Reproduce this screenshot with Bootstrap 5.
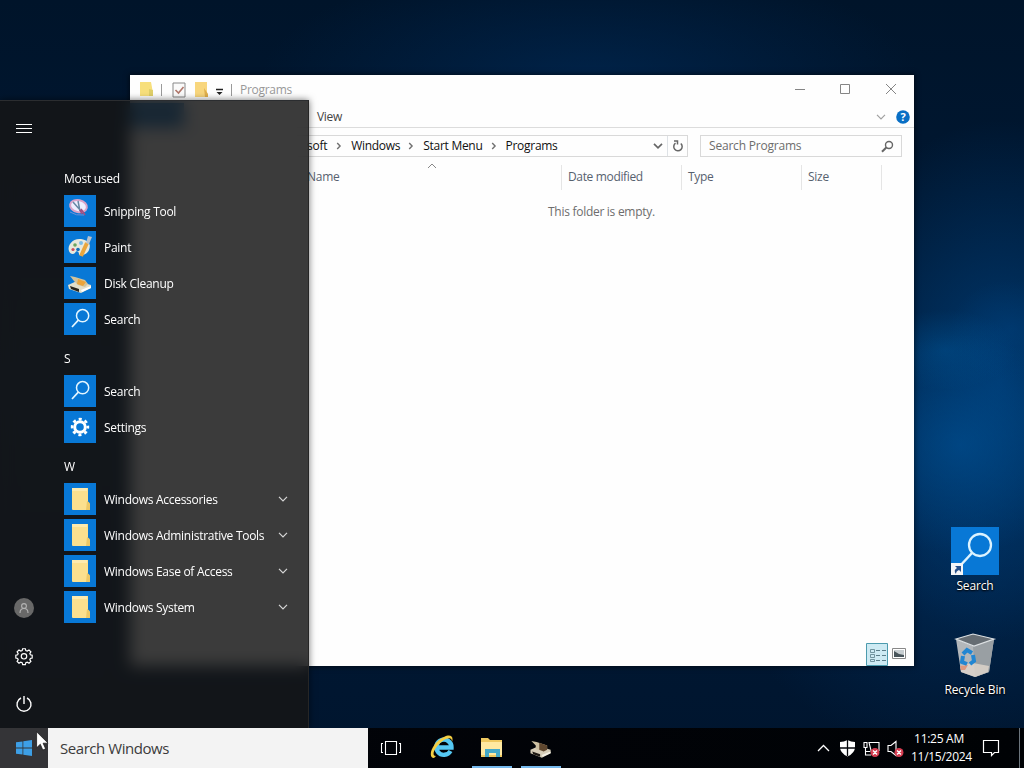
<!DOCTYPE html>
<html lang="en">
<head>
<meta charset="utf-8">
<title>Desktop</title>
<link href="https://cdn.jsdelivr.net/npm/bootstrap@5.3.0/dist/css/bootstrap.min.css" rel="stylesheet">
<style>
body{margin:0;overflow:hidden;font-family:"Open Sans","Noto Sans",sans-serif;font-size:12px;line-height:16px;letter-spacing:-.28px}
svg{display:block;flex:none}
.desktop{width:1024px;height:768px;background:
 radial-gradient(ellipse 70px 40px at 945px 350px,rgba(0,88,155,.4),transparent),
 radial-gradient(ellipse 60px 50px at 1010px 330px,rgba(0,70,135,.35),transparent),
 radial-gradient(ellipse 120px 110px at 960px 445px,rgba(0,88,160,.5),transparent),
 radial-gradient(ellipse 180px 260px at 1000px 380px,rgba(0,72,138,.65),transparent),
 radial-gradient(ellipse 330px 120px at 590px 80px,rgba(0,48,100,.5),transparent),
 radial-gradient(ellipse 240px 220px at 960px 540px,rgba(0,55,110,.55),transparent),
 linear-gradient(#00142a,#001a38 50%,#00152e)}
.explorer{left:130px;top:75px;width:784px;height:591px;background:#fefefe;color:#4c4f55;box-shadow:0 0 5px 1px rgba(0,0,0,.5)}
.titlebar{height:27px;padding:2px 0 0 8px}
.title-text{color:#999;border-left:1px solid #999;line-height:12px;padding-left:8px}
.tabs-row{height:26px;border-bottom:1px solid #dcdcdc}
.file-tab{width:54px;height:24px;background:#1979ca}
.view-tab{margin-left:133px;color:#444}
.addr-row{height:37px;padding-top:7px}
.box-field{height:22px;border:1px solid #d9d9d9}
.addr{width:548px;margin-left:10px;color:#111}
.addr-path{padding-left:166px}
.cols-row{height:25px;color:#57616f}
.cols-row>div{border-right:1px solid #e5e5e5;padding:4px 6px}
.start-menu{left:0;top:100px;width:309px;height:628px;background:rgba(21,21,21,.84);backdrop-filter:blur(8px);box-shadow:0 0 7px rgba(0,0,0,.55);border-top:1px solid #2b2d30;border-right:1px solid #262626;color:#fff}
.rail{width:48px;padding-top:22px;padding-bottom:14px}
.app-list{margin-left:16px;width:228px;padding-top:56px}
.app-head{height:36px;padding-top:14px}
.app-row{height:36px;gap:8px}
.app-row span{padding-top:2px}
.chev{color:#d8d8d8}
.tile{width:32px;height:32px;background:#0878d6}
.icon-label{color:#fff;text-shadow:0 1px 2px #000,0 0 2px #000;margin-top:3px;white-space:nowrap;letter-spacing:-.15px}
.shortcut{width:76px}
.taskbar{left:0;top:728px;width:1024px;height:40px;background:linear-gradient(90deg,#02040a,#000205)}
.start-btn{width:48px;background:#343437}
.search-box{width:320px;background:#f3f3f3;color:#3b3b3b;font-size:15px;padding-left:12px;letter-spacing:-.45px}
.task-btn{width:49px;padding-top:5px}
.task-btn.running{width:40px;margin-right:9px;border-bottom:2px solid #76b9ed}
.clock{color:#fff;line-height:18px;width:60px}
.day-edge{width:5px;height:40px}
.pointer{left:36px;top:731px}
</style>
<script src="https://cdn.jsdelivr.net/npm/bootstrap@5.3.0/dist/js/bootstrap.bundle.min.js"></script>
</head>
<body>
<svg width="0" height="0" class="position-absolute">
 <symbol id="folder" viewBox="0 0 32 32"><path d="M8 5h16v14l2 2v6H9q-1 0-1-1z" fill="#fbe08e"/><path d="M8 5h15v3H8z" fill="#fdeaae"/><path d="M23 18q3 1 3 4v5h-4z" fill="#edc866"/></symbol>
 <symbol id="lens" viewBox="0 0 32 32"><g fill="none" stroke="#e4f6ff"><circle cx="18.600" cy="12.700" r="6.100" stroke-width="1.500"/><path d="M14.300 17.200L8 24" stroke-width="1.700"/></g></symbol>
 <symbol id="chev" viewBox="0 0 10 6"><path d="M1 .8l4 4 4-4" fill="none" stroke="currentColor" stroke-width="1.200"/></symbol>
 <symbol id="sep" viewBox="0 0 6 8"><path d="M1.200 1l2.900 3-2.900 3" fill="none" stroke="#707070" stroke-width="1.400"/></symbol>
</svg>

<main class="desktop position-relative overflow-hidden">

 <section class="explorer position-absolute d-flex flex-column">
  <div class="titlebar d-flex align-items-center">
   <svg width="93" height="20" viewBox="0 0 93 20"><path d="M2 2h11l2 11v3H2z" fill="#f7df7c"/><path d="M11 9l4 1v6h-4z" fill="#dfcf69"/><path d="M23.500 4v12" stroke="#9a9a9a"/><path d="M35 3h12v14H35z" fill="#fafafa" stroke="#888"/><path d="M37.500 10l3 3 5-6" fill="none" stroke="#b0776b" stroke-width="1.600"/><path d="M57 2h12v10l1 5H57z" fill="#f8d67d"/><path d="M66 8l4 6v3h-3z" fill="#e0af4c"/><path d="M78 9.500h7" stroke="#222" stroke-width="1.500"/><path d="M78.500 12h6l-3 3z" fill="#222"/></svg>
   <span class="title-text">Programs</span>
   <svg class="ms-auto me-3" width="105" height="20" viewBox="0 0 105 20" fill="none" stroke="#858585"><path d="M2 9.500h10M47.500 4.500h9v9h-9zM93 4l10 10m0-10L93 14"/></svg>
  </div>
  <div class="tabs-row d-flex align-items-center">
   <div class="file-tab"></div><span class="view-tab pt-1">View</span>
   <svg class="ms-auto mt-1" width="10" height="6" style="color:#a0a0a0"><use href="#chev"/></svg>
   <svg class="mt-1" width="14" height="14" viewBox="0 0 14 14" style="margin:0 4px 0 10px"><circle cx="7" cy="7" r="6.800" fill="#096fc5"/><text x="7" y="11" text-anchor="middle" font-size="11" font-weight="700" fill="#fff">?</text></svg>
  </div>
  <div class="addr-row d-flex">
   <div class="addr box-field d-flex align-items-center">
    <div class="addr-path d-flex align-items-center flex-grow-1"><span>soft</span><svg style="margin-left:9px" width="6" height="8"><use href="#sep"/></svg><span style="margin-left:9px">Windows</span><svg style="margin-left:8px" width="6" height="8"><use href="#sep"/></svg><span style="margin-left:9px">Start Menu</span><svg class="ms-2" width="6" height="8"><use href="#sep"/></svg><span style="margin-left:9px">Programs</span></div>
    <svg width="10" height="6" viewBox="0 0 10 6" class="me-1"><path d="M1 .8l4 4 4-4" fill="none" stroke="#666" stroke-width="1.700"/></svg>
    <div class="border-start h-100 d-flex align-items-center justify-content-center" style="width:20px"><svg width="12" height="14" viewBox="0 0 12 14"><path d="M3.500 4.200a4.200 4.200 0 1 0 5.300.300M2 2h3.500v3.500" transform="matrix(1 0 0 1 0 0)" fill="none" stroke="#666" stroke-width="1.500"/></svg></div>
   </div>
   <div class="box-field d-flex align-items-center justify-content-between" style="width:202px;margin-left:12px;padding:0 7px 0 8px;color:#6d6d6d;letter-spacing:-.2px"><span>Search Programs</span><svg width="13" height="13" viewBox="0 0 13 13" fill="none" stroke="#666"><circle cx="8" cy="5" r="3.500" stroke-width="1.400"/><path d="M5.300 7.500L1 11.800" stroke-width="2"/></svg></div>
  </div>
  <div class="cols-row d-flex position-relative">
   <svg class="position-absolute" width="10" height="6" viewBox="0 0 10 6" style="left:297px;top:-2px"><path d="M1 5l4-4 4 4" fill="none" stroke="#888"/></svg>
   <div style="width:432px;padding-left:177px">Name</div><div style="width:120px;letter-spacing:-.35px">Date modified</div><div style="width:120px">Type</div><div style="width:80px">Size</div>
  </div>
  <div style="padding:14px 0 0 418px;color:#6d6d6d">This folder is empty.</div>
  <div class="mt-auto d-flex justify-content-end align-items-end" style="padding-right:5px">
   <svg width="43" height="23" viewBox="0 0 43 23"><path d="M.5.500h21v22H.500z" fill="#cdeaf3" stroke="#4c9bae"/><g fill="none" stroke="#5b7d89"><path d="M4.500 6.500h4v3h-4zM4.500 11.500h4v3h-4zM4.500 16.500h4v2h-4z" stroke-width=".8"/><path d="M10 7.500h4m2 0h4m-10 5h4m2 0h4m-10 5h4m2 0h4"/></g><path d="M26.500 5.500h13v10h-13z" fill="#fff" stroke="#888"/><path d="M28 7h10v7H28z" fill="#c7ced1"/><path d="M28 8l5 3 5 1v2H28z" fill="#48545a"/></svg>
  </div>
 </section>

 <div class="shortcut position-absolute text-center d-flex flex-column align-items-center" style="left:937px;top:527px">
  <svg width="48" height="48" viewBox="0 0 48 48"><path d="M0 0h48v48H0z" fill="#0878d6"/><g fill="none" stroke="#dcf3ff"><circle cx="29" cy="18" r="11" stroke-width="2.300"/><path d="M21 26L8 40" stroke-width="2.500"/></g><path d="M0 36h12v12H0z" fill="#f4f6f8"/><path d="M4 39h6v6l-2-2q-3 1-3 4-3-4 1-6z" fill="#28518b"/></svg>
  <span class="icon-label">Search</span>
 </div>
 <div class="shortcut position-absolute text-center d-flex flex-column align-items-center" style="left:937px;top:631px">
  <svg width="48" height="48" viewBox="0 0 48 48"><path d="M5 8l17 7 21-7-5 33-14 5-14-5z" fill="#b3b7ba"/><path d="M22 15l21-7-5 33-14 5z" fill="#999fa3"/><path d="M5 8l17-5 21 5-20 7z" fill="#666d73" stroke="#dde1e3" stroke-width="1.200"/><path d="M9 35l13-3 16 3-1 6-13 5-14-5z" fill="#ddd3ca" opacity=".85"/><path d="M9 35l8-1-3 5-4 0z" fill="#e08a6c" opacity=".8"/><g fill="none" stroke="#2286d2" stroke-width="4"><path d="M12 23l4-4 5 3M22 24l1 6-4 3M16 33l-5-2 1-6"/></g></svg>
  <span class="icon-label">Recycle Bin</span>
 </div>

 <aside class="start-menu position-absolute d-flex">
  <nav class="rail d-flex flex-column align-items-center">
   <svg width="16" height="12" viewBox="0 0 16 12"><path d="M0 1.500h16M0 5.500h16M0 9.500h16" stroke="#fff"/></svg>
   <div class="mt-auto d-flex flex-column align-items-center" style="gap:28px">
    <svg width="20" height="20" viewBox="0 0 20 20"><circle cx="10" cy="10" r="10" fill="#686868"/><g fill="none" stroke="#b4b4b4" stroke-width="1.100"><circle cx="10" cy="8" r="2.400"/><path d="M6 15q0-4.500 4-4.500t4 4.500"/></g></svg>
    <svg width="20" height="20" viewBox="-11 -11 22 22" fill="none" stroke="#fff" stroke-width="1.300"><path d="M-1.500-8h3l.5 2 1.600.6 1.900-1.200 2.100 2.100-1.200 1.900.6 1.300 2 .5v3l-2 .5-.6 1.300 1.200 1.900-2.100 2.100-1.900-1.200-1.600.6-.5 2h-3l-.5-2-1.600-.6-1.900 1.200-2.100-2.100 1.200-1.900-.6-1.300-2-.5v-3l2-.5.6-1.300-1.200-1.900 2.100-2.100 1.900 1.200 1.600-.6z"/><circle r="3" cy=".3"/></svg>
    <svg width="20" height="20" viewBox="0 0 20 20" fill="none" stroke="#fff" stroke-width="1.400"><path d="M7 4a7 7 0 1 0 6 0M10 2v8"/></svg>
   </div>
  </nav>
  <div class="app-list">
   <div class="app-head">Most used</div>
   <div class="app-row d-flex align-items-center"><svg class="tile" viewBox="0 0 32 32"><ellipse cx="14.500" cy="11" rx="8.500" ry="6" fill="#eef" stroke="#d9a3c8" stroke-width="2" transform="rotate(12 14 11)"/><path d="M9 7l8 9M14 6l2 10" stroke="#6688a5" stroke-width="1.500"/><path d="M16 15l2 4M17 14l4 6" stroke="#a04f82" stroke-width="1.600"/><path d="M6 17q6 4 14 3" stroke="#6c8fd8" fill="none"/></svg><span>Snipping Tool</span></div>
   <div class="app-row d-flex align-items-center"><svg class="tile" viewBox="0 0 32 32"><path d="M17 8C9 7 3 14 5 20c1 3 4 4 6 2 1-3 4-2 4 1 0 3 8 1 10-4 3-7-2-10-8-11z" fill="#e8e9dc"/><circle cx="11" cy="14" r="1.800" fill="#6da660"/><circle cx="17" cy="12" r="2" fill="#79bce8"/><circle cx="9" cy="18.500" r="1.600" fill="#ca5060"/><circle cx="14" cy="18.500" r="1.800" fill="#1270bd"/><path d="M17 25l6-13" stroke="#e9a63c" stroke-width="4"/><path d="M22 12l2-7 4 1-3 7z" fill="#b9c2cc"/></svg><span>Paint</span></div>
   <div class="app-row d-flex align-items-center"><svg class="tile" viewBox="0 0 32 32"><path d="M4 18l9-4 14 4v3l-10 5L5 22z" fill="#e3dfca"/><path d="M6 19l9 3v3l-8-3z" fill="#2a251c"/><path d="M17 23l10-4v2l-9 4z" fill="#fff"/><path d="M6 9l5 1 10 3 3 4-3 3-7-2-4-4z" fill="#d3c39a"/><path d="M14 12l8 3-3 4-6-2z" fill="#eba43b"/></svg><span>Disk Cleanup</span></div>
   <div class="app-row d-flex align-items-center"><svg class="tile"><use href="#lens"/></svg><span>Search</span></div>
   <div class="app-head">S</div>
   <div class="app-row d-flex align-items-center"><svg class="tile"><use href="#lens"/></svg><span>Search</span></div>
   <div class="app-row d-flex align-items-center"><svg class="tile" viewBox="0 0 32 32"><circle cx="16" cy="16" r="5.300" fill="none" stroke="#fff" stroke-width="3"/><circle cx="16" cy="16" r="7.900" fill="none" stroke="#fff" stroke-width="2.600" stroke-dasharray="3.100 3.100" stroke-dashoffset="1.550"/></svg><span>Settings</span></div>
   <div class="app-head">W</div>
   <div class="app-row d-flex align-items-center"><svg class="tile"><use href="#folder"/></svg><span>Windows Accessories</span><svg class="chev ms-auto me-1" width="10" height="6"><use href="#chev"/></svg></div>
   <div class="app-row d-flex align-items-center"><svg class="tile"><use href="#folder"/></svg><span>Windows Administrative Tools</span><svg class="chev ms-auto me-1" width="10" height="6"><use href="#chev"/></svg></div>
   <div class="app-row d-flex align-items-center"><svg class="tile"><use href="#folder"/></svg><span>Windows Ease of Access</span><svg class="chev ms-auto me-1" width="10" height="6"><use href="#chev"/></svg></div>
   <div class="app-row d-flex align-items-center"><svg class="tile"><use href="#folder"/></svg><span>Windows System</span><svg class="chev ms-auto me-1" width="10" height="6"><use href="#chev"/></svg></div>
  </div>
 </aside>

 <footer class="taskbar position-absolute d-flex">
  <div class="start-btn d-flex align-items-center justify-content-center"><svg width="16" height="16" viewBox="0 0 16 16" fill="#3d9fe6"><path d="M0 2.300l6.500-.9v6.200H0zM7.300 1.300L16 0v7.600H7.300zM0 8.400h6.500v6.200L0 13.700zM7.300 8.400H16V16l-8.700-1.300z"/></svg></div>
  <div class="search-box d-flex align-items-center">Search Windows</div>
  <div class="task-btn d-flex justify-content-center pe-1"><svg width="30" height="30" viewBox="0 0 30 30" fill="none" stroke="#fff" stroke-width="1.100"><path d="M9.500 8.500h11v13h-11zM7 10.500H5.500v9H7M23 10.500h1.500v9H23"/></svg></div>
  <div class="task-btn d-flex justify-content-center"><svg width="28" height="28" viewBox="0 0 28 28"><path d="M22.500 18a7.600 7.600 0 1 1 1-3.500H9" fill="none" stroke="#55c8f3" stroke-width="4.400"/><path d="M6 25C-1 25 4 9 16 4c6-3 10-1 8 5 0-5-4-4-8-2C8 12 2 23 8 23" fill="#f5cf43"/></svg></div>
  <div class="task-btn running d-flex justify-content-center" style="margin-left:6px"><svg width="24" height="28" viewBox="0 0 24 28"><path d="M1 5h7l2 2h12v17H1z" fill="#efc960"/><path d="M1 9h21v13H1z" fill="#ffe9a1"/><path d="M5 16h15v8h-4v-4H9v4H5z" fill="#45a9c8"/></svg></div>
  <div class="task-btn running d-flex justify-content-center"><svg width="28" height="30" viewBox="0 0 32 32"><path d="M4 18l9-4 14 4v4l-10 5L4 22z" fill="#d6cdb8"/><path d="M6 20l9 3v3l-8-3z" fill="#1d1813"/><path d="M17 24l10-4v2l-9 4z" fill="#f4f1e6"/><path d="M5 8l6 1 12 4v5l-4 2-9-3v-4z" fill="#cdc0a2"/><path d="M14 10l9 3v5l-4 2-5-2z" fill="#5f472f"/></svg></div>
  <div class="ms-auto d-flex align-items-center">
   <svg width="94" height="24" viewBox="0 0 94 24"><path d="M5 15l5.500-5.500L16 15" fill="none" stroke="#fff" stroke-width="1.300"/><path d="M27 6q4 0 7.500-2 3.500 2 7.500 2v5q0 6-7.500 9.500Q27 17 27 11z" fill="#fff"/><path d="M34.500 4v16M27 12h15" stroke="#05070c" stroke-width="1.300"/><g fill="none" stroke="#fff" stroke-width="1.100"><path d="M51 6.500h3v5h-3zM52.500 11.500v8m0-4h5M56 6.500h10v8h-8zM53 19h5"/><path d="M75 9.500h3l5-4v14l-5-4h-3z"/></g><g fill="#d43c50"><circle cx="62" cy="16.500" r="4.500"/><circle cx="86" cy="16.500" r="4.500"/></g><path d="M60 14.500l4 4m0-4l-4 4M84 14.500l4 4m0-4l-4 4" stroke="#fff" stroke-width="1.300"/></svg>
   <div class="clock text-center text-nowrap ps-1">11:25 AM<br>11/15/2024</div>
   <svg width="44" height="24" viewBox="0 0 44 24" style="margin-left:8px"><path d="M8.500 4.500h15v12h-4l-3 3v-3h-8z" fill="none" stroke="#fff" stroke-width="1.200"/></svg>
   <div class="day-edge border-start border-secondary"></div>
  </div>
 </footer>
 <svg class="pointer position-absolute" width="13" height="20" viewBox="0 0 13 20"><path d="M.6.800v16l3.700-3.600 2.500 5.800 2.800-1.200-2.500-5.600h5z" fill="#fff" stroke="#111" stroke-width=".7"/></svg>
</main>
</body>
</html>
